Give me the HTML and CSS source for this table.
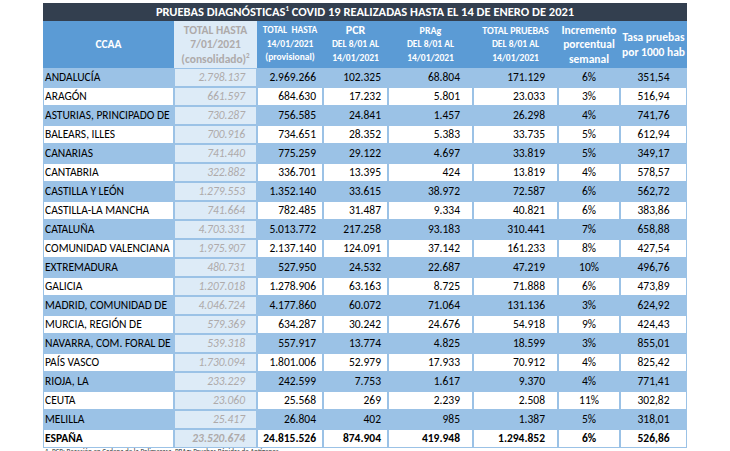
FILE: index.html
```html
<!DOCTYPE html>
<html lang="es">
<head>
<meta charset="utf-8">
<title>Pruebas diagnósticas COVID 19</title>
<link rel="stylesheet" href="styles.css">
</head>
<body>
<div class="wrap">
<table class="pd">
<colgroup>
<col class="c1"><col class="c2"><col class="c3"><col class="c4"><col class="c5"><col class="c6"><col class="c7"><col class="c8">
</colgroup>
<thead>
<tr class="title"><th colspan="8">PRUEBAS DIAGNÓSTICAS<sup>1</sup> COVID 19 REALIZADAS HASTA EL 14 DE ENERO DE 2021</th></tr>
<tr class="head">
<th class="big">CCAA</th>
<th class="big cons">TOTAL HASTA<br>7/01/2021<br>(consolidado)<sup>2</sup></th>
<th class="sm">TOTAL&nbsp; HASTA<br>14/01/2021<br>(provisional)</th>
<th class="sm"><span class="lead">PCR</span><br>DEL 8/01 AL<br>14/01/2021</th>
<th class="sm"><span class="lead2">PRAg</span><br>DEL 8/01 AL<br>14/01/2021</th>
<th class="sm"><span class="lead2">TOTAL PRUEBAS</span><br>DEL 8/01 AL<br>14/01/2021</th>
<th class="big">Incremento<br>porcentual<br>semanal</th>
<th class="big">Tasa pruebas<br>por 1000 hab</th>
</tr>
</thead>
<tbody>
<tr class="b"><td>ANDALUCÍA</td><td class="g">2.798.137</td><td>2.969.266</td><td>102.325</td><td>68.804</td><td>171.129</td><td class="c">6%</td><td class="c">351,54</td></tr>
<tr class="w"><td>ARAGÓN</td><td class="g">661.597</td><td>684.630</td><td>17.232</td><td>5.801</td><td>23.033</td><td class="c">3%</td><td class="c">516,94</td></tr>
<tr class="b"><td>ASTURIAS, PRINCIPADO DE</td><td class="g">730.287</td><td>756.585</td><td>24.841</td><td>1.457</td><td>26.298</td><td class="c">4%</td><td class="c">741,76</td></tr>
<tr class="w"><td>BALEARS, ILLES</td><td class="g">700.916</td><td>734.651</td><td>28.352</td><td>5.383</td><td>33.735</td><td class="c">5%</td><td class="c">612,94</td></tr>
<tr class="b"><td>CANARIAS</td><td class="g">741.440</td><td>775.259</td><td>29.122</td><td>4.697</td><td>33.819</td><td class="c">5%</td><td class="c">349,17</td></tr>
<tr class="w"><td>CANTABRIA</td><td class="g">322.882</td><td>336.701</td><td>13.395</td><td>424</td><td>13.819</td><td class="c">4%</td><td class="c">578,57</td></tr>
<tr class="b"><td>CASTILLA Y LEÓN</td><td class="g">1.279.553</td><td>1.352.140</td><td>33.615</td><td>38.972</td><td>72.587</td><td class="c">6%</td><td class="c">562,72</td></tr>
<tr class="w"><td>CASTILLA-LA MANCHA</td><td class="g">741.664</td><td>782.485</td><td>31.487</td><td>9.334</td><td>40.821</td><td class="c">6%</td><td class="c">383,86</td></tr>
<tr class="b"><td>CATALUÑA</td><td class="g">4.703.331</td><td>5.013.772</td><td>217.258</td><td>93.183</td><td>310.441</td><td class="c">7%</td><td class="c">658,88</td></tr>
<tr class="w"><td>COMUNIDAD VALENCIANA</td><td class="g">1.975.907</td><td>2.137.140</td><td>124.091</td><td>37.142</td><td>161.233</td><td class="c">8%</td><td class="c">427,54</td></tr>
<tr class="b"><td>EXTREMADURA</td><td class="g">480.731</td><td>527.950</td><td>24.532</td><td>22.687</td><td>47.219</td><td class="c">10%</td><td class="c">496,76</td></tr>
<tr class="w"><td>GALICIA</td><td class="g">1.207.018</td><td>1.278.906</td><td>63.163</td><td>8.725</td><td>71.888</td><td class="c">6%</td><td class="c">473,89</td></tr>
<tr class="b"><td>MADRID, COMUNIDAD DE</td><td class="g">4.046.724</td><td>4.177.860</td><td>60.072</td><td>71.064</td><td>131.136</td><td class="c">3%</td><td class="c">624,92</td></tr>
<tr class="w"><td>MURCIA, REGIÓN DE</td><td class="g">579.369</td><td>634.287</td><td>30.242</td><td>24.676</td><td>54.918</td><td class="c">9%</td><td class="c">424,43</td></tr>
<tr class="b"><td>NAVARRA, COM. FORAL DE</td><td class="g">539.318</td><td>557.917</td><td>13.774</td><td>4.825</td><td>18.599</td><td class="c">3%</td><td class="c">855,01</td></tr>
<tr class="w"><td>PAÍS VASCO</td><td class="g">1.730.094</td><td>1.801.006</td><td>52.979</td><td>17.933</td><td>70.912</td><td class="c">4%</td><td class="c">825,42</td></tr>
<tr class="b"><td>RIOJA, LA</td><td class="g">233.229</td><td>242.599</td><td>7.753</td><td>1.617</td><td>9.370</td><td class="c">4%</td><td class="c">771,41</td></tr>
<tr class="w"><td>CEUTA</td><td class="g">23.060</td><td>25.568</td><td>269</td><td>2.239</td><td>2.508</td><td class="c">11%</td><td class="c">302,82</td></tr>
<tr class="b"><td>MELILLA</td><td class="g">25.417</td><td>26.804</td><td>402</td><td>985</td><td>1.387</td><td class="c">5%</td><td class="c">318,01</td></tr>
<tr class="w tot"><td>ESPAÑA</td><td class="g">23.520.674</td><td>24.815.526</td><td>874.904</td><td>419.948</td><td>1.294.852</td><td class="c">6%</td><td class="c">526,86</td></tr>
</tbody>
</table>
<p class="note">1. PCR: Reacción en Cadena de la Polimerasa. PRAg: Pruebas Rápidas de Antígenos</p>
</div>
</body>
</html>
```
FILE: styles.css
```css
html, body {
  margin: 0;
  padding: 0;
  background: #ffffff;
}
body {
  font-family: Carlito, Calibri, Lato, "Liberation Sans", sans-serif;
  color: #000;
}
.wrap {
  padding: 3px 0 0 43px;
}
.pd {
  border-collapse: separate;
  border-spacing: 0;
  table-layout: fixed;
  width: 644px;
}
.c1 { width: 131px; }
.c2 { width: 83px; }
.c3 { width: 66px; }
.c4 { width: 65px; }
.c5 { width: 85px; }
.c6 { width: 85px; }
.c7 { width: 62px; }
.c8 { width: 67px; }

.title th {
  background: #333f4f;
  color: #fff;
  height: 18px;
  padding: 0;
  font-size: 12.5px;
  font-weight: bold;
  line-height: 18px;
  text-align: center;
}
.title sup, .cons sup {
  font-size: 7px;
  line-height: 0;
  vertical-align: 5px;
}
.head th {
  background: #5b9bd5;
  color: #fff;
  height: 47px;
  padding: 0;
  font-weight: bold;
  text-align: center;
  vertical-align: middle;
}
.head th.big {
  font-size: 11.5px;
  line-height: 14.5px;
}
.head th.sm {
  font-size: 9.5px;
  line-height: 13.5px;
}
.head th.cons {
  background: #ddebf7;
  color: #aeaaaa;
}
.lead {
  font-size: 12px;
}
.lead2 {
  font-size: 10px;
}

tbody td {
  height: 17px;
  padding: 0 6px 0 0;
  border: 1px solid #9bc2e6;
  font-size: 11.5px;
  line-height: 17px;
  text-align: right;
  white-space: nowrap;
  overflow: hidden;
}
tbody td:first-child {
  text-align: left;
  padding: 0 0 0 1px;
}
tr.b td { background: #9bc2e6; }
tr.w td { background: #ffffff; }
tbody td.g {
  background: #ddebf7;
  color: #aeaaaa;
  font-style: italic;
  padding-right: 11px;
}
tbody td:nth-child(5), tbody td:nth-child(6) {
  padding-right: 12px;
}
tbody td.c {
  text-align: center;
  padding: 0;
}
tr.tot td {
  font-weight: bold;
}
.note {
  margin: 0;
  padding-left: 2px;
  font-size: 7px;
  line-height: 8px;
  color: #333;
}
```
